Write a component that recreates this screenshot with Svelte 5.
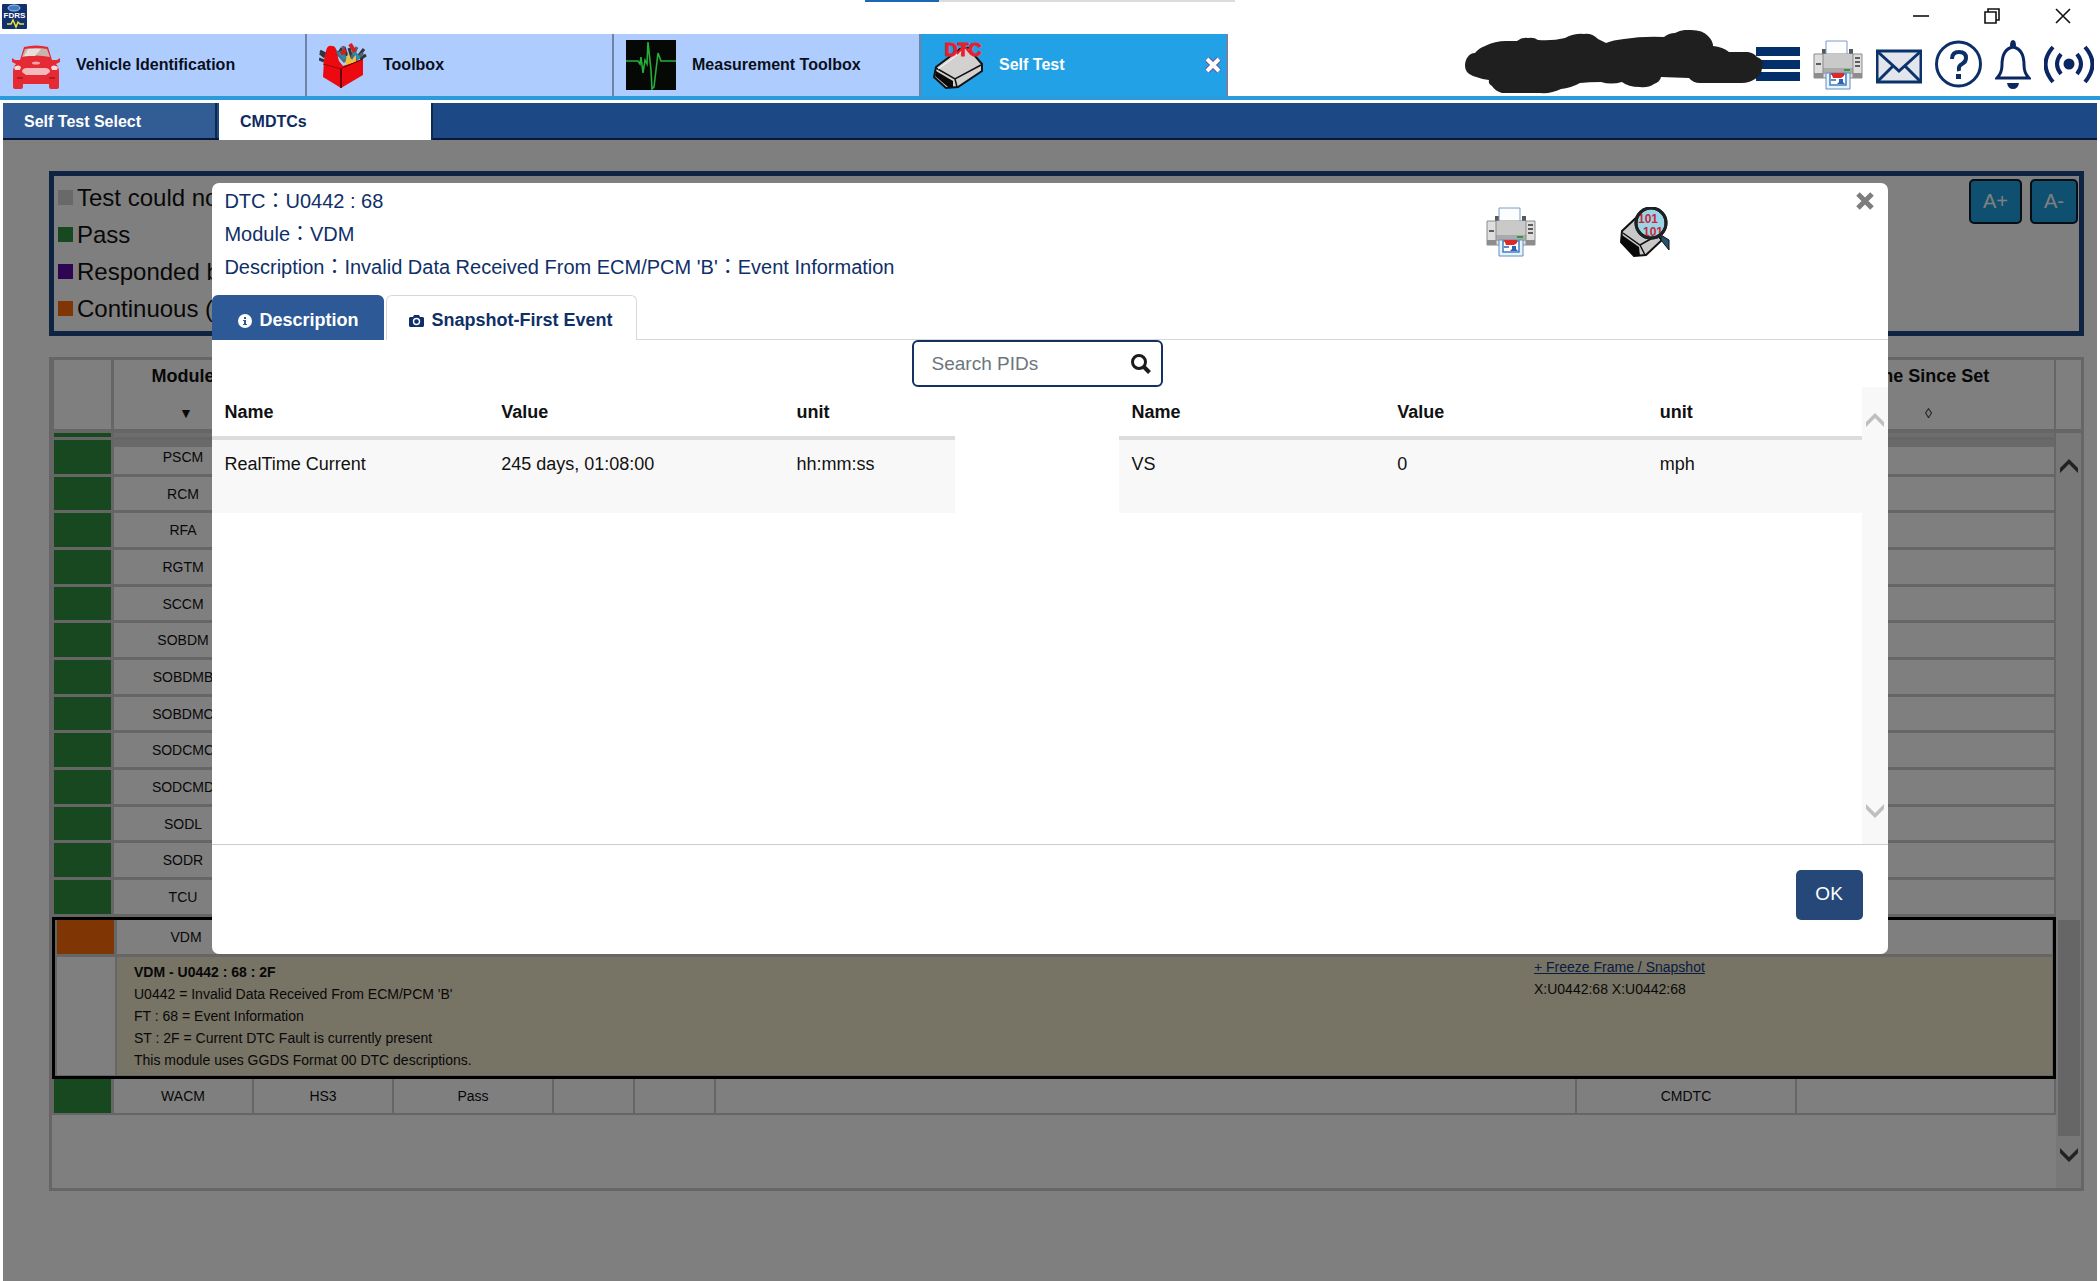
<script>
	let activeTab = $state('snapshot');
	let search = $state('');

	const mainTabs = [
		{ id: 'vehicle', label: 'Vehicle Identification' },
		{ id: 'toolbox', label: 'Toolbox' },
		{ id: 'measure', label: 'Measurement Toolbox' },
		{ id: 'selftest', label: 'Self Test' }
	];

	const legend = [
		{ cls: 'none', label: 'Test could no' },
		{ cls: 'pass', label: 'Pass' },
		{ cls: 'hex', label: 'Responded b' },
		{ cls: 'cont', label: 'Continuous (' }
	];

	const modules = ['PSCM', 'RCM', 'RFA', 'RGTM', 'SCCM', 'SOBDM', 'SOBDMB', 'SOBDMC', 'SODCMC', 'SODCMD', 'SODL', 'SODR', 'TCU'];

	const details = [
		"U0442 = Invalid Data Received From ECM/PCM 'B'",
		'FT : 68 = Event Information',
		'ST : 2F = Current DTC Fault is currently present',
		'This module uses GGDS Format 00 DTC descriptions.'
	];

	const pids = [
		{ side: 'left', name: 'RealTime Current', value: '245 days, 01:08:00', unit: 'hh:mm:ss' },
		{ side: 'right', name: 'VS', value: '0', unit: 'mph' }
	];
</script>

{#snippet printer()}
	<svg width="50" height="50" viewBox="0 0 50 50">
		<path d="M9 9h4v8H9zM36 9h4v8h-4z" fill="#55585c" />
		<path d="M13 1h21v17H13z" fill="#fbfdff" stroke="#7e9cc0" />
		<path d="M1 14h48v24H1z" fill="#dedede" stroke="#8b8b8b" />
		<path d="M10 14h30v20H10z" fill="#c9c9c9" />
		<path d="M10 28h30v6H10z" fill="#aaa" />
		<path d="M1 33h9v5H1zM40 33h9v5h-9z" fill="#8d8d8d" />
		<path d="M10 14v24M40 14v24" stroke="#8b8b8b" />
		<path d="M3 24h5M42 18h5M42 22h5M42 26h5" stroke="#333" stroke-width="1.5" />
		<path d="M31 30h6" stroke="#2d9b3f" stroke-width="2" />
		<path d="M13 33h24v16H13z" fill="#e8f3fc" stroke="#5f8fc0" />
		<path d="M17 34h16v11H17z" fill="#fff" stroke="#3f7fbe" stroke-width="1.5" />
		<path d="M18 33h13v3l-3 2h-8z" fill="#dd2a28" />
		<path d="M18 40h5" stroke="#2f62b5" stroke-width="1.5" />
		<path d="M24 44l2-2v-3h4v3l2 2z" fill="#2f62b5" />
	</svg>
{/snippet}

{#snippet chevron(dir)}
	<svg class="chevron" width="18" height="14" viewBox="0 0 18 14">
		<path d={dir === 'up' ? 'M0 14V9l9-9 9 9v5l-9-9z' : 'M0 0v5l9 9 9-9V0L9 9z'} fill="currentColor" />
	</svg>
{/snippet}

{#snippet columns()}
	<colgroup>
		<col class="c-status" /><col class="c-mid" /><col class="c-mid" /><col class="c-result" />
		<col class="c-small" /><col class="c-small" /><col /><col class="c-type" /><col class="c-time" />
	</colgroup>
{/snippet}

<div class="app">
	<header class="titlebar">
		<svg class="logo" width="25" height="25" viewBox="0 0 25 25">
			<rect width="25" height="25" rx="1" fill="#13306e" />
			<ellipse cx="12" cy="4" rx="6" ry="3" fill="#3c7dc0" stroke="#a9c7ea" />
			<text x="12.5" y="14" text-anchor="middle" font-family="Liberation Sans, sans-serif" font-size="8" font-weight="700" fill="#fff">FDRS</text>
			<path d="M5 20h4l2-4 3 7 2-5 2 2h4" fill="none" stroke="#e8e33a" stroke-width="1.5" />
		</svg>
		<div class="progress"><span></span></div>
		<div class="window-buttons">
			<button aria-label="Minimize"><svg width="16" height="16" viewBox="0 0 16 16"><path d="M0 8h16" /></svg></button>
			<button aria-label="Restore"><svg width="16" height="16" viewBox="0 0 16 16"><path d="M1 4h11v11H1zM4 4V1h11v11h-3" /></svg></button>
			<button aria-label="Close"><svg width="16" height="16" viewBox="0 0 16 16"><path d="M1 1l14 14M15 1L1 15" /></svg></button>
		</div>
	</header>

	<div class="toolbar">
		<nav class="main-tabs">
			{#each mainTabs as tab}
				<button class="main-tab" class:active={tab.id === 'selftest'}>
					{#if tab.id === 'vehicle'}
						<svg width="48" height="50" viewBox="0 0 48 50">
							<path d="M12 7q12-3 24 0l4 13h5l3-2v4l-4 2q3 3 3 8v15q0 2-2 2h-6q-2 0-2-2v-3H11v3q0 2-2 2H3q-2 0-2-2V32q0-5 3-8l-4-2v-4l3 2h5z" fill="#e62a34" />
							<path d="M13 9q11-2 22 0l3 8q-14-3-28 0z" fill="#c9b3ad" />
							<path d="M16 9h13l-6 7H12z" fill="#e8dedb" />
							<ellipse cx="24" cy="23" rx="4" ry="1.5" fill="#f0a0a8" />
							<path d="M10 32q0-4 5-4h18q5 0 5 4l-4 3H14z" fill="#f3b9bd" />
							<path d="M2 27q5-3 7 0l-1 3H3zM46 27q-5-3-7 0l1 3h5z" fill="#fbdadd" />
							<path d="M5 38h6M37 38h6" stroke="#b81620" stroke-width="2" />
						</svg>
					{:else if tab.id === 'toolbox'}
						<svg width="48" height="50" viewBox="0 0 48 50">
							<path d="M6 17l-5-4M5 21l-5-2M1 11l6 3M16 18l-4-8M18 16l5-8M28 16l-3-9M33 18l-3-10M38 18l7-9M41 19l6-4" stroke="#30363f" stroke-width="3" />
							<path d="M14 8l12 14M24 6l2 14M38 7l-6 12M44 13l-8 8" stroke="#59636e" stroke-width="3" />
							<path d="M20 12l6 7M34 11l6 8" stroke="#2b8ca5" stroke-width="4" />
							<path d="M31 4l5 8M27 10l-5 4" stroke="#d91c1c" stroke-width="4" />
							<path d="M5 20l2-9q1-6 6-5 4 0 4 5l3 10 4 5 20-7v16l-22 13-18-11z" fill="#ec0910" />
							<path d="M26 25l3-12 4 8 4-6v7z" fill="#f1c12e" />
							<path d="M23 28l21-9" stroke="#5a0508" />
							<path d="M22 28v20" stroke="#3b0508" stroke-width="1.5" />
							<path d="M4 24l18 5" stroke="#9d0509" />
						</svg>
					{:else if tab.id === 'measure'}
						<svg width="50" height="50" viewBox="0 0 50 50">
							<rect width="50" height="50" fill="#050805" />
							<path d="M0 21h12l2 3 1-7 2 16 2-13 2 4 1-22 3 28 1 19 2-2 4-34 3 8h15" fill="none" stroke="#25b03a" stroke-width="1.6" />
						</svg>
					{:else}
						<svg width="50" height="50" viewBox="0 0 50 50">
							<path d="M3 27L27 9l8-1 14 16v7L25 47l-12 1L1 37z" fill="#d3d0d0" stroke="#111" stroke-width="2" />
							<path d="M3 28l19 11 26-14M22 39l2 8" fill="none" stroke="#111" stroke-width="1.5" />
							<path d="M3 31l17 10v6h-5L2 36z" fill="#0a0a0a" />
							<path d="M5 29l26-19 6-1" fill="none" stroke="#fff" />
							<path d="M24 14l7-8 7 8" fill="none" stroke="#e8202c" stroke-width="2" />
							<text x="30" y="16" text-anchor="middle" font-family="Liberation Sans, sans-serif" font-size="18" fill="#e8202c" stroke="#e8202c">DTC</text>
						</svg>
					{/if}
					<span>{tab.label}</span>
					{#if tab.id === 'selftest'}
						<svg class="tab-close" width="18" height="18" viewBox="0 0 18 18"><path d="M3 3l12 12M15 3L3 15" stroke="#6d4b91" stroke-width="6" /><path d="M3 3l12 12M15 3L3 15" stroke="#fff" stroke-width="4" /></svg>
					{/if}
				</button>
			{/each}
		</nav>

		<div class="tools">
			<svg class="scribble" width="300" height="64" viewBox="0 0 300 64">
				<path d="M0 36C0 29 4 23 10 23Q14 18 20 16Q30 11 41 11H52Q57 7 63 8Q69 7 73 10Q88 11 100 8Q110 3 119 4Q127 3 133 9L141 13Q148 10 159 9Q178 6 199 7Q204 3 210 3Q218-1 226 0Q238 0 243 6Q248 11 248 16Q258 17 264 22H283Q289 23 292 27Q300 30 297 37Q297 45 290 49Q284 53 277 53H235Q228 53 224 48L196 47Q195 52 189 54Q183 58 175 57Q163 57 157 52Q146 55 136 52Q124 52 115 53Q106 58 96 59Q86 64 75 63H37Q30 61 27 56Q23 54 24 50Q16 49 8 46Q0 43 0 36Z" fill="#1f1f1f" />
			</svg>
			<button aria-label="Menu"><svg width="44" height="50" viewBox="0 0 44 50"><path d="M0 7h44v9H0zM0 20h44v9H0zM0 32h44v9H0z" fill="#03306b" /></svg></button>
			<button aria-label="Print">{@render printer()}</button>
			<button aria-label="Messages">
				<svg width="46" height="50" viewBox="0 0 46 50"><path d="M1 11h44v31H1z" fill="#e2e5eb" stroke="#0a326c" stroke-width="3" /><path d="M2 12l21 19 21-19M2 41l15-15M44 41L29 26" fill="none" stroke="#0a326c" stroke-width="3" /></svg>
			</button>
			<button aria-label="Help">
				<svg width="47" height="50" viewBox="0 0 47 50"><circle cx="23.500" cy="24" r="22" fill="#fff" stroke="#0b2f69" stroke-width="3" /><path d="M17 19q0-7 7-7t7 6q0 4-4 6-4 2-3 7" fill="none" stroke="#0b2f69" stroke-width="4" /><path d="M21 34h5v5h-5z" fill="#0b2f69" /></svg>
			</button>
			<button aria-label="Notifications">
				<svg width="36" height="50" viewBox="0 0 36 50"><path d="M2 38q5-5 5-13 0-16 11-18 11 2 11 18 0 8 5 13z" fill="#fff" stroke="#0b2763" stroke-width="3" /><path d="M15 6q0-6 3-6t3 6zM12 43h12q-1 6-6 6t-6-6z" fill="#0b2763" /></svg>
			</button>
			<button aria-label="Connection">
				<svg width="50" height="50" viewBox="0 0 50 50"><circle cx="25" cy="24" r="5.500" fill="#0b2763" /><path d="M17 14q-8 10 0 20M33 14q8 10 0 20M9 7q-15 17 0 35M41 7q15 17 0 35" fill="none" stroke="#0b2763" stroke-width="4" /></svg>
			</button>
		</div>
	</div>

	<nav class="sub-tabs">
		<button class="sub-tab">Self Test Select</button>
		<button class="sub-tab current">CMDTCs</button>
	</nav>

	<main>
		<section class="legend">
			<ul>
				{#each legend as item}
					<li><span class="swatch {item.cls}"></span>{item.label}</li>
				{/each}
			</ul>
			<div class="font-buttons">
				<button>A+</button>
				<button>A-</button>
			</div>
		</section>

		<section class="results">
			<div class="results-head">
				<table>
					{@render columns()}
					<thead>
						<tr>
							<th></th>
							<th>Module<span class="sort">▼</span></th>
							<th></th><th></th><th></th><th></th><th></th><th></th>
							<th>Time Since Set<span class="sort">◊</span></th>
						</tr>
					</thead>
				</table>
				<div class="head-corner"></div>
			</div>
			<div class="results-body">
				<table>
					{@render columns()}
					<tbody>
						<tr class="clipped">
							<td class="status pass"></td>
							{#each Array(8) as _}<td></td>{/each}
						</tr>
						{#each modules as name}
							<tr>
								<td class="status pass"></td>
								<td>{name}</td>
								{#each Array(7) as _}<td></td>{/each}
							</tr>
						{/each}
						<tr class="selected">
							<td colspan="9">
								<table class="expanded">
									<colgroup><col class="c-status" /><col class="c-mid" /><col /></colgroup>
									<tbody>
										<tr>
											<td class="status cont"></td>
											<td>VDM</td>
											<td></td>
										</tr>
										<tr>
											<td class="gutter"></td>
											<td class="detail" colspan="2">
												<div class="detail-row">
													<div class="detail-text">
														<strong>VDM - U0442 : 68 : 2F</strong>
														{#each details as line}<p>{line}</p>{/each}
													</div>
													<div class="detail-links">
														<a href="#snapshot">+ Freeze Frame / Snapshot</a>
														<p>X:U0442:68 X:U0442:68</p>
													</div>
												</div>
											</td>
										</tr>
									</tbody>
								</table>
							</td>
						</tr>
						<tr class="last">
							<td class="status pass"></td>
							<td>WACM</td>
							<td>HS3</td>
							<td>Pass</td>
							<td></td><td></td><td></td>
							<td>CMDTC</td>
							<td></td>
						</tr>
					</tbody>
				</table>
				<div class="scrollbar">
					{@render chevron('up')}
					<div class="thumb"></div>
					{@render chevron('down')}
				</div>
			</div>
		</section>

		<div class="overlay">
			<div class="modal" role="dialog" aria-label="DTC snapshot">
				<div class="modal-header">
					<div class="modal-title">
						<p>DTC：U0442 : 68</p>
						<p>Module：VDM</p>
						<p>Description：Invalid Data Received From ECM/PCM 'B'：Event Information</p>
					</div>
					<div class="modal-actions">
						<button aria-label="Print snapshot">{@render printer()}</button>
						<button aria-label="Inspect data">
							<svg width="50" height="50" viewBox="0 0 50 50">
								<path d="M2 24L18 9l24 24-16 15-12 1L1 35z" fill="#c9c8c8" stroke="#111" stroke-width="2" />
								<path d="M3 26l17 12 16-9M20 38l5 10" fill="none" stroke="#111" stroke-width="1.5" />
								<path d="M2 28l17 12 1 9h-6L1 36z" fill="#080808" />
								<path d="M41 28l8 5v10l-8-10z" fill="#24526e" stroke="#111" />
								<circle cx="31" cy="16" r="15" fill="#9bd4e4" stroke="#1c2224" stroke-width="3" />
								<text x="28" y="16" text-anchor="middle" font-family="Liberation Sans, sans-serif" font-size="12" font-weight="700" fill="#c8283e">101</text>
								<text x="33" y="29" text-anchor="middle" font-family="Liberation Sans, sans-serif" font-size="12" font-weight="700" fill="#c8283e">101</text>
								<circle cx="31" cy="16" r="15" fill="none" stroke="#1c2224" stroke-width="3" />
							</svg>
						</button>
					</div>
					<button class="modal-close" aria-label="Close dialog">
						<svg width="18" height="18" viewBox="0 0 18 18"><path d="M2 2l14 14M16 2L2 16" stroke="#7d7d7d" stroke-width="5" /></svg>
					</button>
				</div>

				<div class="modal-tabs">
					<button class:open={activeTab === 'description'} onclick={() => (activeTab = 'description')}>
						<svg width="14" height="14" viewBox="0 0 14 14"><circle cx="7" cy="7" r="7" fill="currentColor" /><path d="M6 3h2v2H6zM5 6h3v4h1v1H5v-1h1V7H5z" fill="#2d5a96" /></svg>
						Description
					</button>
					<button class:open={activeTab === 'snapshot'} onclick={() => (activeTab = 'snapshot')}>
						<svg width="15" height="14" viewBox="0 0 15 14"><path d="M1 3h3l1-2h5l1 2h3l1 1v8l-1 1H1l-1-1V4z" fill="currentColor" /><circle cx="7.500" cy="7.500" r="3" fill="none" stroke="#fff" stroke-width="1.4" /></svg>
						Snapshot-First Event
					</button>
				</div>

				<div class="search-row">
					<div class="search">
						<input type="text" placeholder="Search PIDs" aria-label="Search PIDs" bind:value={search} />
						<svg width="20" height="20" viewBox="0 0 20 20"><circle cx="8" cy="8" r="6.500" fill="none" stroke="#1b1b1b" stroke-width="3" /><path d="M12.500 12.500l6 6" stroke="#1b1b1b" stroke-width="4" /></svg>
					</div>
				</div>

				<div class="modal-body">
					<div class="pid-tables">
						{#each pids as pid}
							<table class="pid {pid.side}">
								<thead>
									<tr><th class="name">Name</th><th class="value">Value</th><th>unit</th></tr>
								</thead>
								<tbody>
									<tr><td>{pid.name}</td><td>{pid.value}</td><td>{pid.unit}</td></tr>
								</tbody>
							</table>
						{/each}
					</div>
					<div class="modal-scroll">
						{@render chevron('up')}
						{@render chevron('down')}
					</div>
				</div>

				<div class="modal-footer">
					<button class="ok">OK</button>
				</div>
			</div>
		</div>
	</main>
</div>

<style>
	:global(body) {
		margin: 0;
		background: #fff;
	}

	.app {
		min-height: 100vh;
		display: flex;
		flex-direction: column;
		font-family: 'Liberation Sans', Arial, 'Noto Sans CJK TC', sans-serif;
		color: #111;
	}

	.app :global(*) {
		box-sizing: border-box;
	}

	button {
		font-family: inherit;
		border: 0;
		padding: 0;
		background: none;
		cursor: pointer;
	}

	svg {
		display: block;
		flex: none;
	}

	p,
	ul {
		margin: 0;
		padding: 0;
		list-style: none;
	}

	/* title bar */
	.titlebar {
		height: 34px;
		display: grid;
		grid-template-columns: 1fr auto 1fr;
		align-items: start;
	}

	.logo {
		margin: 4px 0 0 2px;
	}

	.progress {
		width: 370px;
		height: 2px;
		background: #dcdcdc;
	}

	.progress span {
		display: block;
		width: 20%;
		height: 2px;
		background: #1d66b8;
	}

	.window-buttons {
		display: flex;
		justify-content: flex-end;
		gap: 55px;
		padding: 8px 29px 0 0;
	}

	.window-buttons path {
		fill: none;
		stroke: #111;
		stroke-width: 1.6;
	}

	/* main toolbar */
	.toolbar {
		height: 66px;
		display: flex;
		justify-content: space-between;
		border-bottom: 4px solid #2b9bdc;
	}

	.main-tabs {
		display: flex;
	}

	.main-tab {
		width: 307px;
		display: flex;
		align-items: center;
		gap: 16px;
		padding: 0 4px 0 12px;
		background: #aecdfe;
		border-right: 2px solid #6e83a6;
		font-size: 16px;
		font-weight: 700;
		color: #0a0f1c;
	}

	.main-tab.active {
		background: #22a1e6;
		color: #fff;
	}

	.tab-close {
		margin-left: auto;
	}

	.tools {
		display: flex;
		align-items: center;
		gap: 13px;
		padding: 0 6px 0 0;
	}

	.scribble {
		margin: -6px -22px 0 0;
		position: relative;
	}

	/* second navigation */
	.sub-tabs {
		height: 37px;
		margin: 3px 3px 0;
		display: flex;
		gap: 2px;
		background: #1c4886;
		border-bottom: 2px solid #08183a;
	}

	.sub-tab {
		width: 214px;
		padding: 2px 21px 0;
		text-align: left;
		background: #325d94;
		border-right: 2px solid #10294f;
		font-size: 16px;
		font-weight: 700;
		color: #fff;
	}

	.sub-tab.current {
		height: 37px;
		padding-top: 0;
		background: #fff;
		color: #0e2a63;
	}

	main {
		position: relative;
		flex: 1;
		display: flex;
		flex-direction: column;
		gap: 21px;
		margin: 0 3px;
		padding: 31px 13px 90px 46px;
	}

	/* legend */
	.legend {
		display: flex;
		justify-content: space-between;
		border: 5px solid #1f4686;
		padding: 3px 1px 4px 4px;
	}

	.legend li {
		display: flex;
		align-items: center;
		gap: 4px;
		height: 37px;
		font-size: 24px;
	}

	.swatch {
		width: 15px;
		height: 15px;
	}

	.none {
		background: #d3d3d3;
	}

	.pass {
		background: #309040;
	}

	.hex {
		background: #5c0aa6;
	}

	.cont {
		background: #ff6a08;
	}

	.font-buttons {
		display: flex;
		align-items: flex-start;
		gap: 8px;
	}

	.font-buttons button {
		height: 45px;
		padding: 0 12px;
		background: #1f9fdf;
		border: 2px solid #0a1a2a;
		border-radius: 5px;
		font-size: 20px;
		color: #fff;
	}

	/* results table */
	.results {
		flex: 1;
		display: flex;
		flex-direction: column;
		border: 3px solid #ccc;
	}

	.results-head,
	.results-body {
		display: flex;
	}

	.results-body {
		flex: 1;
		align-items: flex-start;
	}

	.results table {
		flex: 1;
		width: 100%;
		table-layout: fixed;
		border-collapse: separate;
		border-spacing: 0;
	}

	.c-status {
		width: 62px;
	}

	.c-mid {
		width: 140px;
	}

	.c-result {
		width: 160px;
	}

	.c-small {
		width: 81px;
	}

	.c-type {
		width: 220px;
	}

	.c-time {
		width: 259px;
	}

	.results th {
		height: 73px;
		padding: 6px 0 0;
		vertical-align: top;
		border-right: 2px solid #ccc;
		border-bottom: 4px solid #ccc;
		font-size: 18px;
		line-height: 20px;
	}

	.results th:first-child {
		border-left: 2px solid #ccc;
		border-right-width: 3px;
	}

	.sort {
		display: block;
		margin-top: 17px;
		padding-left: 6px;
		font-size: 14px;
		font-weight: 400;
	}

	.head-corner {
		width: 25px;
		border-bottom: 4px solid #ccc;
	}

	.results td {
		height: 37px;
		padding: 0;
		border-right: 2px solid #ccc;
		border-bottom: 3px solid #ccc;
		font-size: 14px;
		text-align: center;
	}

	.results tr:nth-child(3n) > td {
		height: 36px;
	}

	.results td.status {
		border-left: 2px solid #ccc;
		border-right-width: 3px;
	}

	.results .clipped td {
		height: 7px;
		background: #dadada;
	}

	.results .clipped td.status {
		background: #309040;
	}

	.results .clipped + tr td:not(.status) {
		background: linear-gradient(#d2d2d2 7px, transparent 7px);
	}

	.results .selected > td {
		border: 0;
	}

	.results .expanded {
		border: 3px solid #000;
	}

	.results .expanded td.gutter {
		border-left: 2px solid #ccc;
		border-bottom-width: 1px;
	}

	.results .expanded td:last-child {
		border-right-width: 1px;
	}

	.results .expanded td.detail {
		background: #eee6ca;
		text-align: left;
		vertical-align: top;
		border-bottom-width: 1px;
	}

	.detail-row {
		display: flex;
		justify-content: space-between;
		padding: 4px 0 4px 17px;
		line-height: 22px;
	}

	.detail-links {
		width: 518px;
		margin-top: -5px;
	}

	.detail-links a {
		color: #123a80;
	}

	.results .last td {
		height: 36px;
		border-bottom-width: 2px;
	}

	.scrollbar {
		width: 25px;
		align-self: stretch;
		display: flex;
		flex-direction: column;
		align-items: center;
		background: #f1f1f1;
		padding: 26px 0;
		color: #444;
	}

	.thumb {
		width: 22px;
		height: 216px;
		margin: auto 0 12px;
		background: #cdcdcd;
	}

	/* modal */
	.overlay {
		position: absolute;
		inset: 0;
		display: flex;
		justify-content: center;
		align-items: flex-start;
		padding-top: 43px;
		background: rgba(0, 0, 0, 0.5);
	}

	.modal {
		width: 80%;
		background: #fff;
		border-radius: 7px;
		overflow: hidden;
	}

	.modal-header {
		height: 112px;
		display: flex;
		padding: 2px 14px 0 12px;
		color: #0f2f68;
	}

	.modal-title {
		flex: 1;
		font-size: 20px;
		line-height: 33px;
	}

	.modal-actions {
		display: flex;
		gap: 84px;
		padding: 22px 186px 0 0;
		align-items: flex-start;
	}

	.modal-close {
		align-self: flex-start;
		padding-top: 7px;
	}

	.modal-tabs {
		display: flex;
		gap: 2px;
		height: 45px;
	}

	.modal-tabs::after {
		content: '';
		flex: 1;
		margin-left: -3px;
		border-bottom: 1px solid #d5d9dd;
	}

	.modal-tabs button {
		display: flex;
		align-items: center;
		gap: 7px;
		padding: 6px 26px 0;
		background: #2d5a96;
		border-radius: 6px 6px 0 0;
		font-size: 18px;
		font-weight: 700;
		color: #fff;
	}

	.modal-tabs button.open {
		background: #fff;
		border: 1px solid #d5d9dd;
		border-bottom: 0;
		padding: 5px 24px 0 22px;
		color: #0f2f68;
	}

	/* keeps the field centred over the tables, not over the scroll gutter */
	.search-row {
		display: flex;
		justify-content: center;
		padding-right: 26px;
	}

	.search {
		width: 251px;
		height: 47px;
		display: flex;
		align-items: center;
		padding: 0 10px 0 18px;
		border: 2px solid #14315f;
		border-radius: 6px;
	}

	.search input {
		flex: 1;
		min-width: 0;
		padding: 0;
		border: 0;
		outline: 0;
		background: none;
		font-family: inherit;
		font-size: 19px;
	}

	.search input::placeholder {
		color: #6c757d;
		opacity: 1;
	}

	.modal-body {
		display: flex;
		min-height: 458px;
		border-bottom: 1px solid #ccc;
	}

	.pid-tables {
		flex: 1;
		display: flex;
		justify-content: space-between;
		align-items: flex-start;
	}

	.pid {
		width: 45%;
		table-layout: fixed;
		border-collapse: separate;
		border-spacing: 0;
		font-size: 18px;
		line-height: 24px;
		text-align: left;
	}

	.pid th {
		height: 53px;
		padding: 0 12px;
		border-bottom: 4px solid #dcdcdc;
	}

	.pid td {
		height: 73px;
		padding: 12px;
		vertical-align: top;
		background: #f8f8f8;
	}

	.left .name {
		width: 37.3%;
	}

	.left .value {
		width: 39.8%;
	}

	.right .name {
		width: 35.8%;
	}

	.right .value {
		width: 35.4%;
	}

	.modal-scroll {
		width: 26px;
		display: flex;
		flex-direction: column;
		justify-content: space-between;
		align-items: center;
		padding: 26px 0;
		background: #f8f8f8;
		color: #bfbfbf;
	}

	.modal-footer {
		height: 109px;
		display: flex;
		justify-content: flex-end;
		align-items: flex-start;
		padding: 25px 25px 0 0;
	}

	.ok {
		width: 67px;
		height: 50px;
		padding-bottom: 3px;
		background: #254878;
		border-radius: 5px;
		font-size: 19px;
		color: #fff;
	}
</style>
